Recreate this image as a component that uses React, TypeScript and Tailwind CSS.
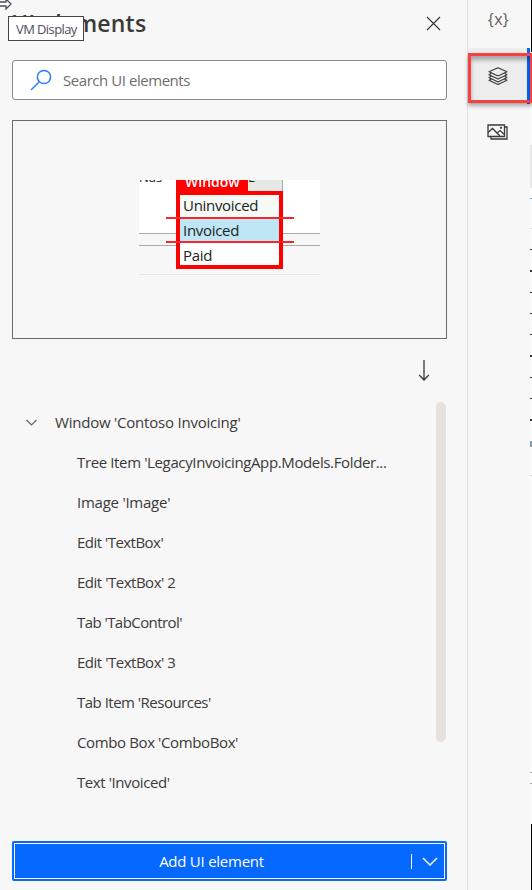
import React from "react";

const items: { label: string; cls: string }[] = [
  { label: "Tree Item 'LegacyInvoicingApp.Models.Folder...", cls: "tracking-[-0.37px]" },
  { label: "Image 'Image'", cls: "tracking-[-0.25px]" },
  { label: "Edit 'TextBox'", cls: "tracking-[-0.53px]" },
  { label: "Edit 'TextBox' 2", cls: "tracking-[-0.48px]" },
  { label: "Tab 'TabControl'", cls: "tracking-[-0.56px]" },
  { label: "Edit 'TextBox' 3", cls: "tracking-[-0.48px]" },
  { label: "Tab Item 'Resources'", cls: "tracking-[-0.51px]" },
  { label: "Combo Box 'ComboBox'", cls: "tracking-[-0.38px]" },
  { label: "Text 'Invoiced'", cls: "tracking-[-0.42px]" },
];

function Header() {
  return (
    <header className="flex h-[60px] items-start justify-between pl-[11px] pr-[26px]">
      <h1 className="mt-[7px] text-[23px] leading-8 font-semibold tracking-[0.2px] text-[#3b3a39]">UI elements</h1>
      <svg className="mt-4 h-[15px] w-[15px]" viewBox="0 0 15 15" fill="none" stroke="#3b3a39" strokeWidth="1.2">
        <path d="M1 1l13 13M14 1L1 14" />
      </svg>
    </header>
  );
}

function SearchBox() {
  return (
    <div className="ml-3 flex h-10 w-[435px] items-center rounded-[3px] border border-[#8a8886] bg-white pl-[17px]">
      <svg className="h-[22px] w-[22px]" viewBox="0 0 22 22" fill="none" stroke="#2b7fff" strokeWidth="1.5">
        <circle cx="14" cy="8" r="6.6" />
        <path d="M9.3 12.7L1 21" />
      </svg>
      <span className="ml-[11px] text-[15px] tracking-[-0.45px] text-[#6f6d6b]">Search UI elements</span>
    </div>
  );
}

function Preview() {
  return (
    <div className="mt-5 ml-3 flex h-[219px] w-[435px] items-start border border-[#6c6a68] pt-[59px] pl-[126px]">
      <div className="relative h-[95px] w-[181px] overflow-hidden text-[#222]">
        <div className="h-[54px] border-b border-[#aaa] bg-white" />
        <div className="h-3 border-b border-[#aaa]" />
        <div className="h-[29px] border-b border-[#e6e6e6]" />
        <span className="absolute top-[-11px] left-0 text-[13px] leading-4">Nas</span>
        <div className="absolute top-0 left-[109px] h-3 w-[35px] border-r border-b border-[#aaa] bg-[#e6e8e5]" />
        <span className="absolute top-[-11px] left-[109px] text-[13px] leading-4">E</span>
        <div className="absolute top-0 left-[37px] h-3 w-[72px] overflow-hidden bg-[#f00]">
          <span className="absolute top-[-8px] left-[9px] text-[14px] leading-5 font-semibold text-white">Window</span>
        </div>
        <div className="absolute top-[11px] left-[37px] h-[78px] w-[107px] border-4 border-[#f00] bg-white text-[15px] tracking-[-0.3px]">
          <div className="h-[23px] bg-[#f5faf7] pl-[3px] leading-[20px]">Uninvoiced</div>
          <div className="h-[24px] bg-[#bee6f5] pl-[3px] leading-[25px]">Invoiced</div>
          <div className="h-[23px] pl-[3px] leading-[26px]">Paid</div>
        </div>
        <div className="absolute top-[37px] left-[27px] h-[2px] w-[128px] bg-[#f5262c]" />
        <div className="absolute top-[61px] left-[27px] h-[2px] w-[128px] bg-[#f5262c]" />
      </div>
    </div>
  );
}

function Tree() {
  return (
    <div className="flex h-[400px] justify-between pr-[21px]">
      <div>
        <div className="flex h-10 items-center pb-[2px] pl-[26px]">
          <svg className="h-[7px] w-[11px]" viewBox="0 0 11 7" fill="none" stroke="#696765" strokeWidth="1.2">
            <path d="M.5 1l5 5 5-5" />
          </svg>
          <span className="ml-[18px] tracking-[-0.22px]">Window 'Contoso Invoicing'</span>
        </div>
        {items.map((item) => (
          <div key={item.label} className="flex h-10 items-center pb-[2px] pl-[77px] whitespace-nowrap">
            <span className={item.cls}>{item.label}</span>
          </div>
        ))}
      </div>
      <div className="-mt-px h-[340px] w-[10px] rounded-full bg-[#e6e1dd]" />
    </div>
  );
}

function Rail() {
  return (
    <nav className="flex w-[62px] flex-col text-[#3b3a39]">
      <div className="flex h-12 items-start justify-center pt-[7px] pr-px text-[16px] leading-6 font-medium tracking-[0.3px] text-[#605e5c]">{"{x}"}</div>
      <div className="flex h-14 justify-center border-r-[3px] border-[#0566ff] bg-[#ededed] pt-[19px] pl-px">
        <svg className="h-[18px] w-5" viewBox="0 0 20 18" fill="none" stroke="#3b3a39" strokeWidth="1.15" strokeLinejoin="round">
          <path d="M10 .8l9 4-9 4.2-9-4.2z" />
          <path d="M3.5 6.3L1 7.7l9 4.3 9-4.3-2.5-1.4" />
          <path d="M3.5 9.2L1 10.6l9 4.3 9-4.3-2.5-1.4" />
          <path d="M3.5 12L1 13.3l9 4.2 9-4.2L16.5 12" />
        </svg>
      </div>
      <div className="flex justify-center pt-5 pr-[3px]">
        <svg className="h-4 w-[21px]" viewBox="0 0 21 16" fill="none" stroke="#3b3a39" strokeWidth="1.3">
          <path d="M1 1h16.5v11.5H1z" />
          <path d="M18 3h2v12H4v-2.5" />
          <path d="M1 8.5l4.5-4 7.5 7.5M10 9l3-2.5 4.5 4" />
          <circle cx="14" cy="3.8" r=".5" />
        </svg>
      </div>
    </nav>
  );
}

// Sliver of the neighbouring designer canvas
function CanvasEdge() {
  return (
    <div className="flex w-[2px] flex-col bg-[#fbfbfb]">
      <div className="ml-px h-[52px] bg-black" />
      <div className="h-[52px]" />
      <div className="mt-[41px] h-[43px] bg-[#e7e7e7]" />
      <div className="mt-[10px] h-px bg-[#7fa4c3]" />
      <div className="mt-[29px] h-px bg-[#ddd]" />
      {[0, 1, 2, 3, 4, 5, 6, 7, 8].map((n) => (
        <div key={n} className="mt-5 h-[1.3px] bg-[#333]" />
      ))}
      <div className="mt-5 h-[6px] bg-[#879cad]" />
      <div className="mt-7 h-px bg-[#ccc]" />
      <div className="mt-auto h-px bg-[#aaa]" />
      <div className="mt-[10px] mb-10 h-px bg-[#aaa]" />
      <div className="ml-px h-[66px] bg-black" />
    </div>
  );
}

export default function App() {
  return (
    <div className="relative flex h-[890px] w-[532px] overflow-hidden bg-[#f7f7f7] font-['Open_Sans','Noto_Sans',sans-serif] text-[15px] text-[#3b3a39]">
      <main className="flex w-[467px] flex-col">
        <Header />
        <SearchBox />
        <Preview />
        <div className="flex h-16 justify-end pt-[21px] pr-[37px]">
          <svg className="h-[21px] w-3" viewBox="0 0 12 21" fill="none" stroke="#3b3a39" strokeWidth="1.3">
            <path d="M6 0v20M1.2 15L6 20l4.8-5" />
          </svg>
        </div>
        <Tree />
        <button className="mt-[38px] ml-3 flex h-10 w-[435px] rounded-[2px] border-2 border-[#0568ff] bg-[#0568ff] text-white">
          <span className="flex h-full w-full items-center border border-white">
            <span className="w-[396px] pr-[3px] text-center text-[15px] tracking-[-0.25px]">Add UI element</span>
            <span className="h-[15px] w-px bg-white" />
            <svg className="ml-[10px] h-[9px] w-4" viewBox="0 0 16 9" fill="none" stroke="white" strokeWidth="1.5">
              <path d="M1 1l7 7 7-7" />
            </svg>
          </span>
        </button>
      </main>
      <div className="w-px bg-[#e2ddd9]" />
      <Rail />
      <CanvasEdge />
      <div className="absolute top-[53px] left-[468px] h-[50px] w-[65px] border-[3px] border-[#f8403f] shadow-[0_3px_4px_rgba(0,0,0,0.3),inset_0_4px_4px_rgba(0,0,0,0.3)]" />
      <div className="absolute top-4 left-2 h-[25px] w-[76px] border border-[#444] bg-white pl-[7px] text-[13px] leading-[24px] tracking-[-0.6px] whitespace-nowrap text-[#504e58]">VM Display</div>
      <svg className="absolute top-[-2px] left-0 h-3 w-3" viewBox="0 0 12 12" fill="white" stroke="#504e58" strokeWidth="1.3">
        <path d="M-1 4h7V1l5 5-5 5V8h-7z" />
      </svg>
    </div>
  );
}
